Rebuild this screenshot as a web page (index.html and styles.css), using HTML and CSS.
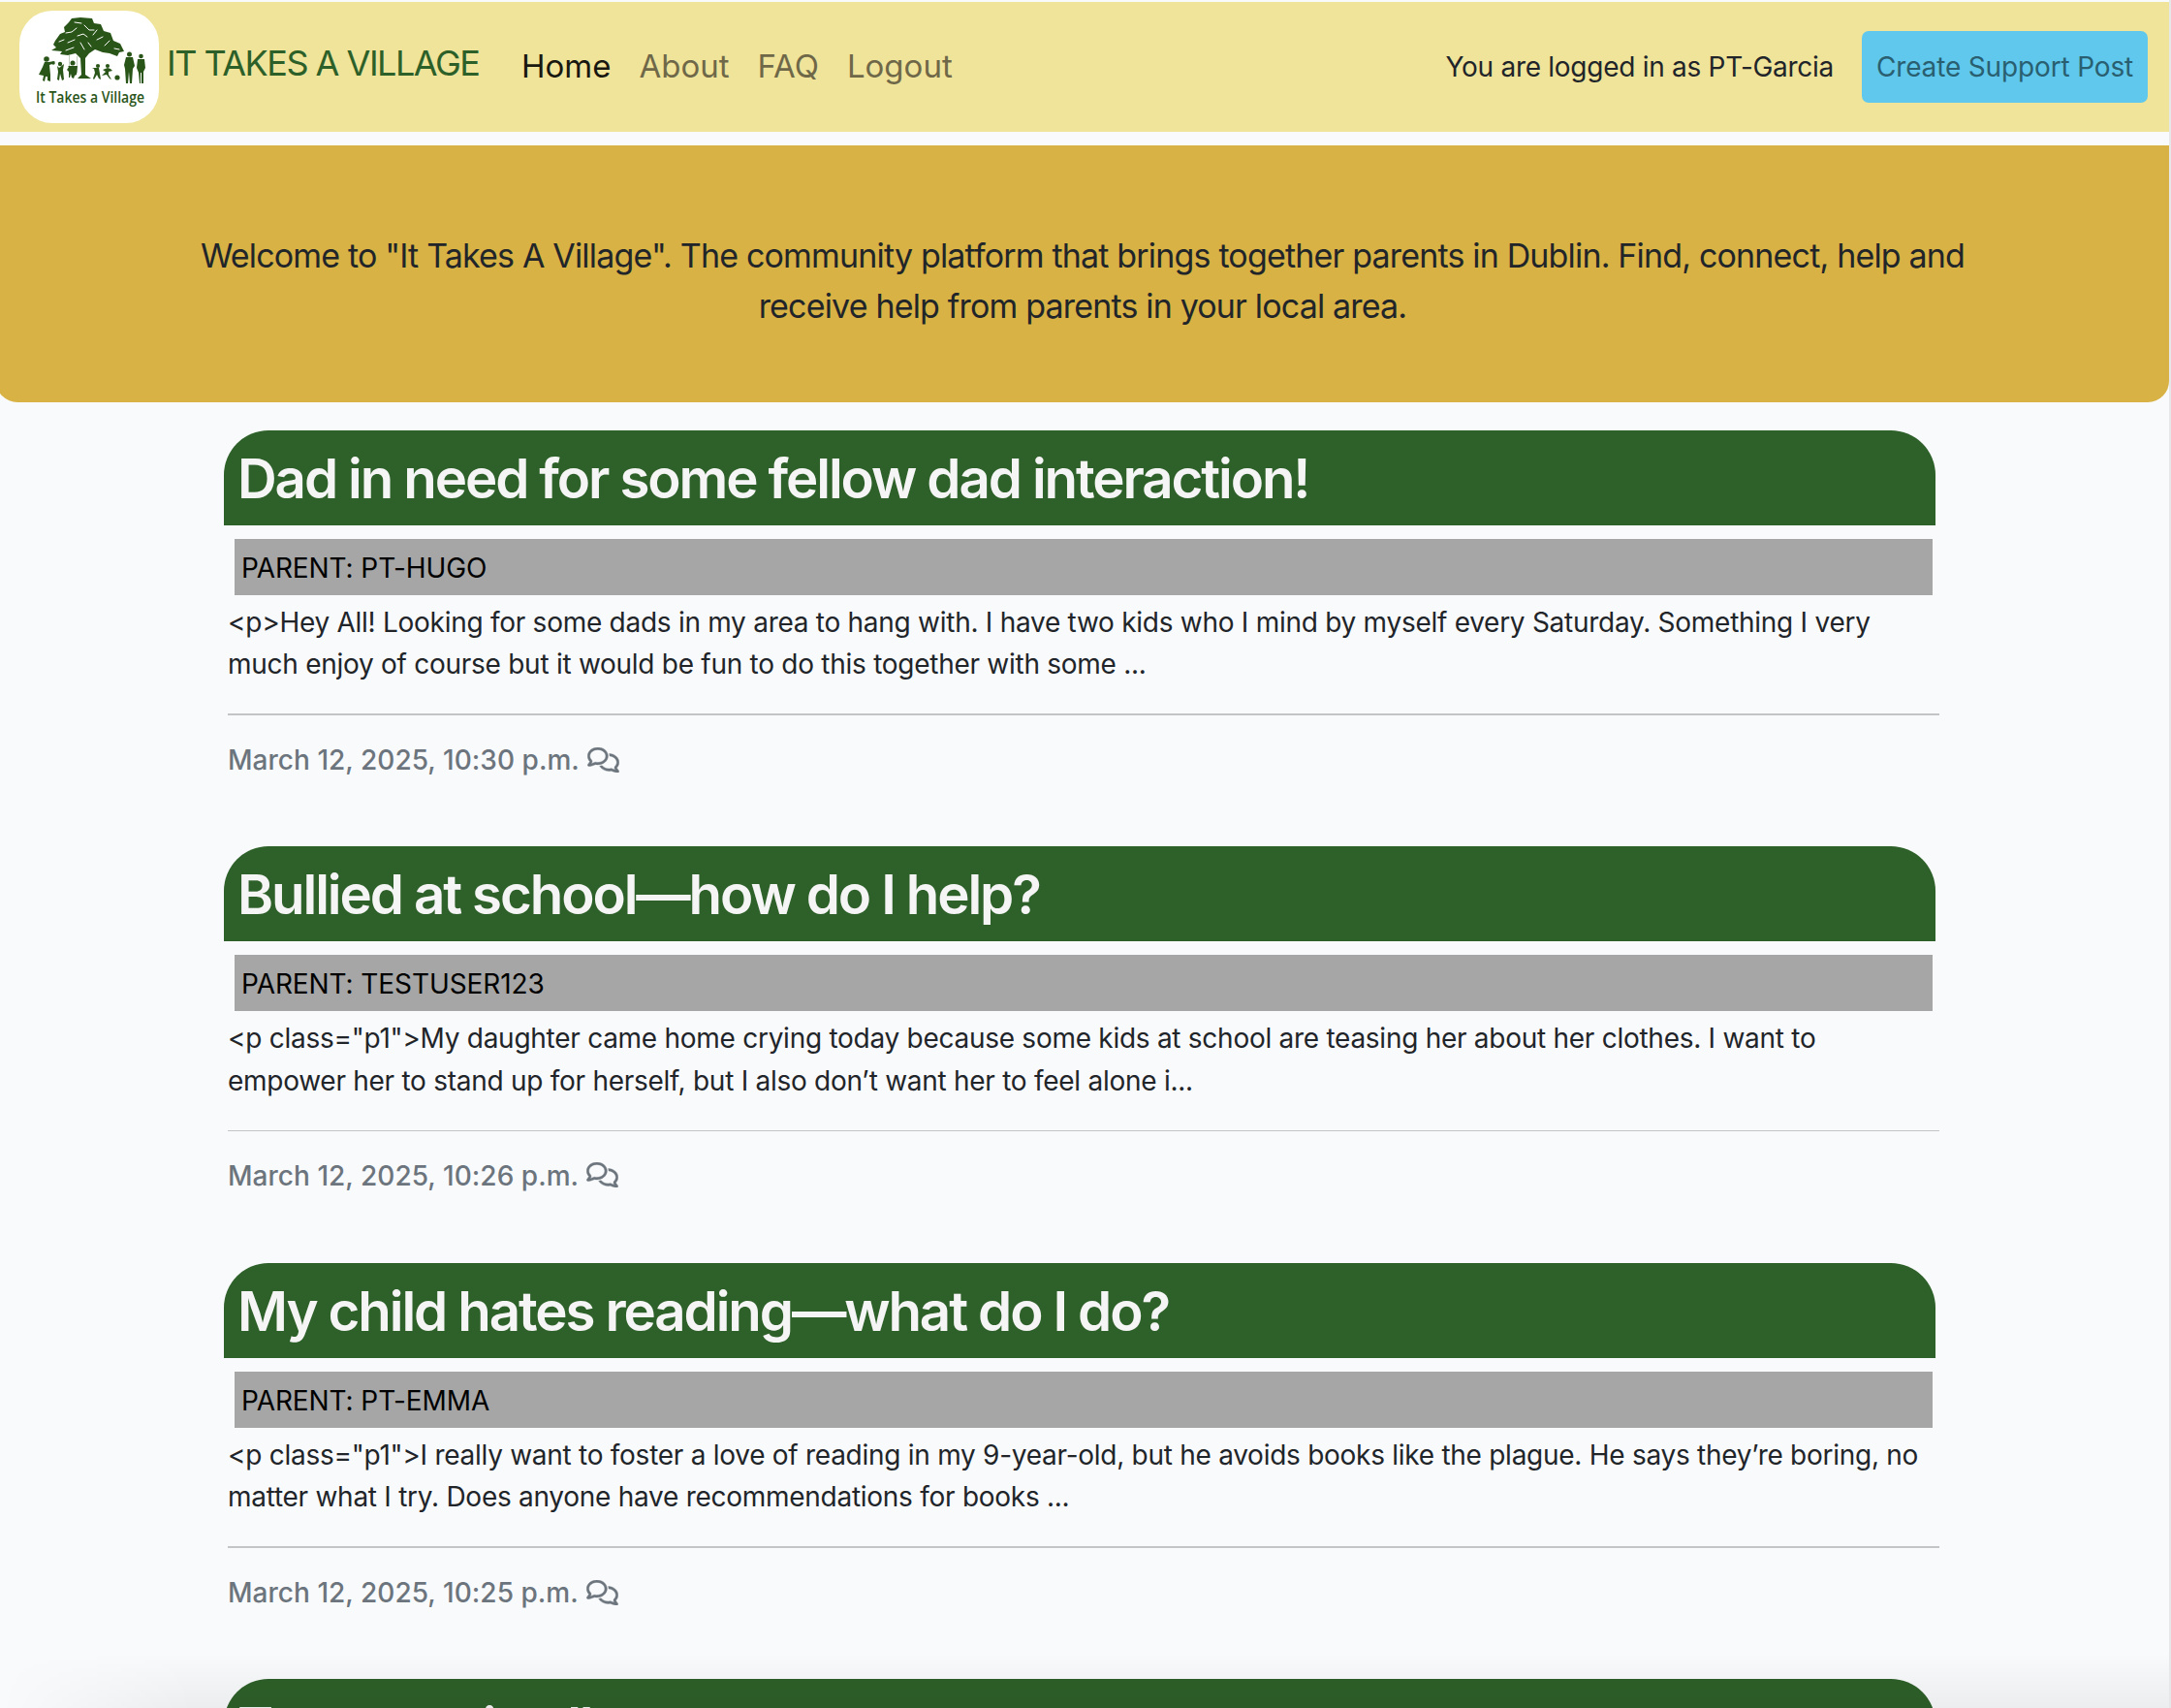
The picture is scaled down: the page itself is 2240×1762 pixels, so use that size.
FILE: index.html
```html
<!DOCTYPE html>
<html lang="en">
<head>
<meta charset="utf-8">
<title>It Takes a Village</title>
<link rel="stylesheet" href="styles.css">
</head>
<body>
<svg width="0" height="0" class="defs" aria-hidden="true">
  <symbol id="comments" viewBox="0 0 640 512"><path d="M88.200 309.100c9.800-18.300 6.800-40.800-7.500-55.800C59.400 230.900 48 204 48 176c0-63.500 63.800-128 160-128s160 64.500 160 128s-63.800 128-160 128c-13.100 0-25.800-1.300-37.800-3.600c-10.400-2-21.200-.6-30.700 4.200c-4.100 2.100-8.300 4.100-12.600 6c-16 7.200-32.900 13.500-49.900 18c2.800-4.600 5.400-9.100 7.900-13.600c1.100-1.900 2.200-3.900 3.200-5.900zM0 176c0 41.800 17.200 80.100 45.900 110.300c-.9 1.700-1.900 3.500-2.800 5.100c-10.300 18.400-22.300 36.500-36.600 52.100c-6.600 7-8.300 17.200-4.600 25.900C5.800 378.300 14.400 384 24 384c43 0 86.500-13.300 122.700-29.700c4.800-2.200 9.600-4.500 14.200-6.800c15.100 3 30.900 4.500 47.100 4.500c114.900 0 208-78.800 208-176S322.900 0 208 0S0 78.800 0 176zM432 480c16.200 0 31.900-1.600 47.100-4.500c4.600 2.300 9.400 4.600 14.200 6.800C529.500 498.700 573 512 616 512c9.600 0 18.200-5.700 22-14.500c3.800-8.800 2-19-4.600-25.900c-14.200-15.600-26.200-33.700-36.600-52.100c-.9-1.700-1.900-3.400-2.800-5.100C622.800 384.100 640 345.800 640 304c0-94.400-87.900-171.500-198.200-175.800c4.100 15.200 6.200 31.200 6.200 47.800l0 .6c87.200 6.700 144 67.500 144 127.400c0 28-11.400 54.900-32.700 77.200c-14.300 15-17.300 37.600-7.500 55.800c1.100 2 2.200 4 3.200 5.900c2.500 4.500 5.200 9 7.900 13.600c-17-4.500-33.900-10.700-49.900-18c-4.300-1.900-8.500-3.900-12.600-6c-9.500-4.800-20.300-6.200-30.700-4.200c-12.100 2.400-24.700 3.600-37.800 3.600c-61.700 0-110-26.500-136.800-62.300c-16 5.400-32.800 9.400-50 11.800C279 439.800 350 480 432 480z"/></symbol>
</svg>
<header class="nav">
  <a class="logo"><svg viewBox="0 0 144 116" width="144" height="116" fill="#2a5519">
    <path d="M33 41L38 38 35 35 37 31 42 24 47 22 46 17 51 12 54 8 63 7 75 8 77 13 84 14 87 21 94 23 97 31 104 34 108 42 103 43 101 47 93 44 86 43 78 40 72 44 68 49 68 66 74 70 60 70 64 66 63 49 58 44 50 46 42 45 44 42z"/>
    <path d="M41 32l5-2M48 23l6-1 5-4M57 12l7 1M67 15l5 5 5 0M80 20l-4 5M86 27l-6 3M60 26l6-2 4 3M50 33l7-3M93 31l-5 5M48 41l8-3M98 39l5 1M63 33l4 7M71 33l3 4" stroke="#fff" stroke-width="1" fill="none" stroke-linecap="round"/>
    <circle cx="28" cy="50" r="2.800"/><path d="M26 53l4 0 7-1-6 4 1 10 0 7-3-1 0-4-2 0-1 5-2-1 1-5-5-1 4-8z"/>
    <path d="M31 55l4-1" stroke="#2a5519" stroke-width="1.500"/><circle cx="35" cy="54" r="1.800"/>
    <circle cx="42" cy="55" r="2.200"/><path d="M39 57l2 2 5-4-1 6 1 10-2 1-2-7-1 7-2-1 1-8z"/>
    <path d="M51.500 46v18M59.500 47v17" stroke="#9aab90" stroke-width=".6"/>
    <circle cx="55" cy="54" r="2.500"/><path d="M50 57l10 0-1 9-2 1-1 3-2-1-1-4-1 4-1 0 0-6-2-2 2-3z"/>
    <circle cx="81" cy="57" r="2.100"/><path d="M75 59l7 0 1 6 1 6-2-1-2-4-3 5-1-1 2-6-1-4z"/>
    <circle cx="91" cy="57" r="2.100"/><path d="M86 61l5-2 3 1 2 2-4 1 0 3 3 5-2-1-3-4-5 1 4-4z"/>
    <circle cx="101" cy="69" r="2.600"/>
    <circle cx="113.500" cy="45" r="2.500"/><path d="M110 48l7 0 2 9-2 3-1 15-2 0-1-12-1 12-2 0-1-15-1-4z"/>
    <circle cx="125.500" cy="47" r="2.300"/><path d="M122 50l7 0 1 9-2 4 0 12-2 0 0-11-1 0 0 11-1 0-1-11-2-5z"/>
    <text x="17" y="95" class="logo-text" textLength="112" lengthAdjust="spacingAndGlyphs">It Takes a Village</text>
  </svg></a>
  <a class="brand">IT TAKES A VILLAGE</a>
  <nav class="links"><a class="active">Home</a><a>About</a><a>FAQ</a><a>Logout</a></nav>
  <span class="user">You are logged in as PT-Garcia</span>
  <a class="create">Create Support Post</a>
</header>
<section class="hero"><p>Welcome to "It Takes A Village". The community platform that brings together parents in Dublin. Find, connect, help and<br>receive help from parents in your local area.</p></section>
<main class="posts">
  <article class="post">
    <h2>Dad in need for some fellow dad interaction!</h2>
    <div class="parent">PARENT: PT-HUGO</div>
    <p class="excerpt">&lt;p&gt;Hey All! Looking for some dads in my area to hang with. I have two kids who I mind by myself every Saturday. Something I very<br>much enjoy of course but it would be fun to do this together with some ...</p>
    <hr>
    <div class="date">March 12, 2025, 10:30 p.m. <svg><use href="#comments"/></svg></div>
  </article>
  <article class="post">
    <h2>Bullied at school—how do I help?</h2>
    <div class="parent">PARENT: TESTUSER123</div>
    <p class="excerpt">&lt;p class="p1"&gt;My daughter came home crying today because some kids at school are teasing her about her clothes. I want to<br>empower her to stand up for herself, but I also don’t want her to feel alone i...</p>
    <hr class="thin">
    <div class="date">March 12, 2025, 10:26 p.m. <svg><use href="#comments"/></svg></div>
  </article>
  <article class="post">
    <h2>My child hates reading—what do I do?</h2>
    <div class="parent">PARENT: PT-EMMA</div>
    <p class="excerpt">&lt;p class="p1"&gt;I really want to foster a love of reading in my 9-year-old, but he avoids books like the plague. He says they’re boring, no<br>matter what I try. Does anyone have recommendations for books ...</p>
    <hr>
    <div class="date">March 12, 2025, 10:25 p.m. <svg><use href="#comments"/></svg></div>
  </article>
  <article class="post last">
    <h2>Teenager in all</h2>
  </article>
</main>
<div class="shade"></div>
</body>
</html>
```
FILE: styles.css
```css
* { box-sizing: border-box; }
html { overflow: hidden; }
body {
  margin: 0;
  height: 1762px;
  overflow: hidden;
  position: relative;
  padding-top: 2px;
  background: #f9fafc;
  border-right: 2px solid #e6e7e9;
  color: #212529;
  font: 28px/43.2px Inter, "Liberation Sans", sans-serif;
}
.defs { position: absolute; }
.nav {
  display: flex;
  align-items: center;
  height: 134px;
  padding: 0 22px 0 20px;
  background: #f0e49a;
  white-space: nowrap;
}
.logo {
  width: 144px;
  height: 116px;
  border-radius: 34px;
  background: #fff;
}
.logo svg { display: block; }
.logo-text { font: 600 16px "Open Sans", sans-serif; }
.brand {
  width: 374px;
  padding: 0 0 6px 8px;
  color: #2d6029;
  font-size: 36px;
  letter-spacing: -1.5px;
}
.links {
  display: flex;
  gap: 29px;
  flex: 1;
  color: #6f6848;
  font-size: 33px;
}
.links .active { color: #181710; }
.user { margin-right: 29px; padding-top: 1px; letter-spacing: -.28px; }
.create {
  width: 295px;
  height: 74px;
  border-radius: 7px;
  background: #5fc8ec;
  color: #295f70;
  line-height: 74px;
  text-align: center;
  letter-spacing: -.15px;
}
.hero {
  height: 265px;
  margin: 14px 0 0 -4px;
  padding-top: 88px;
  border-radius: 0 0 22px 22px;
  background: #d8b244;
  text-align: center;
  font-size: 34px;
  line-height: 52px;
  letter-spacing: -.83px;
  white-space: nowrap;
}
.hero p { margin: 0; }
.posts {
  width: 1770px;
  margin: 29px 0 0 231px;
}
.post { height: 429.33px; white-space: nowrap; }
.post.last { height: 30px; overflow: hidden; }
.post h2 {
  width: 1766px;
  height: 98px;
  margin: 0 0 14px;
  padding-left: 14px;
  border-radius: 46px 46px 0 0;
  background: #2e6029;
  color: #f5f5f5;
  font-size: 56.4px;
  font-weight: 560;
  line-height: 100px;
  letter-spacing: -2.1px;
}
.parent {
  width: 1752px;
  height: 58px;
  margin-left: 11px;
  padding-left: 7px;
  background: #a6a6a6;
  color: #000;
  line-height: 60px;
  letter-spacing: -.1px;
}
.excerpt { margin: 7px 0 29px 4px; letter-spacing: -.27px; }
.post hr {
  height: 2px;
  margin: 0 0 0 4px;
  border: 0;
  background: #c3c4c6;
}
.post .thin { height: 1px; margin-bottom: 1px; }
.date {
  display: flex;
  align-items: center;
  margin: 25px 0 0 4px;
  color: #6c757d;
  font-weight: 520;
  letter-spacing: .03px;
}
.date svg {
  width: 33px;
  height: 26px;
  margin: -2px 0 0 8px;
  fill: currentColor;
  stroke: currentColor;
  stroke-width: 8px;
}
.shade {
  position: absolute;
  inset: auto 0 0 0;
  height: 56px;
  background: linear-gradient(to bottom, transparent, rgba(0, 0, 0, .05));
  -webkit-mask-image: linear-gradient(to right, transparent, #000 200px);
  mask-image: linear-gradient(to right, transparent, #000 200px);
}
```
